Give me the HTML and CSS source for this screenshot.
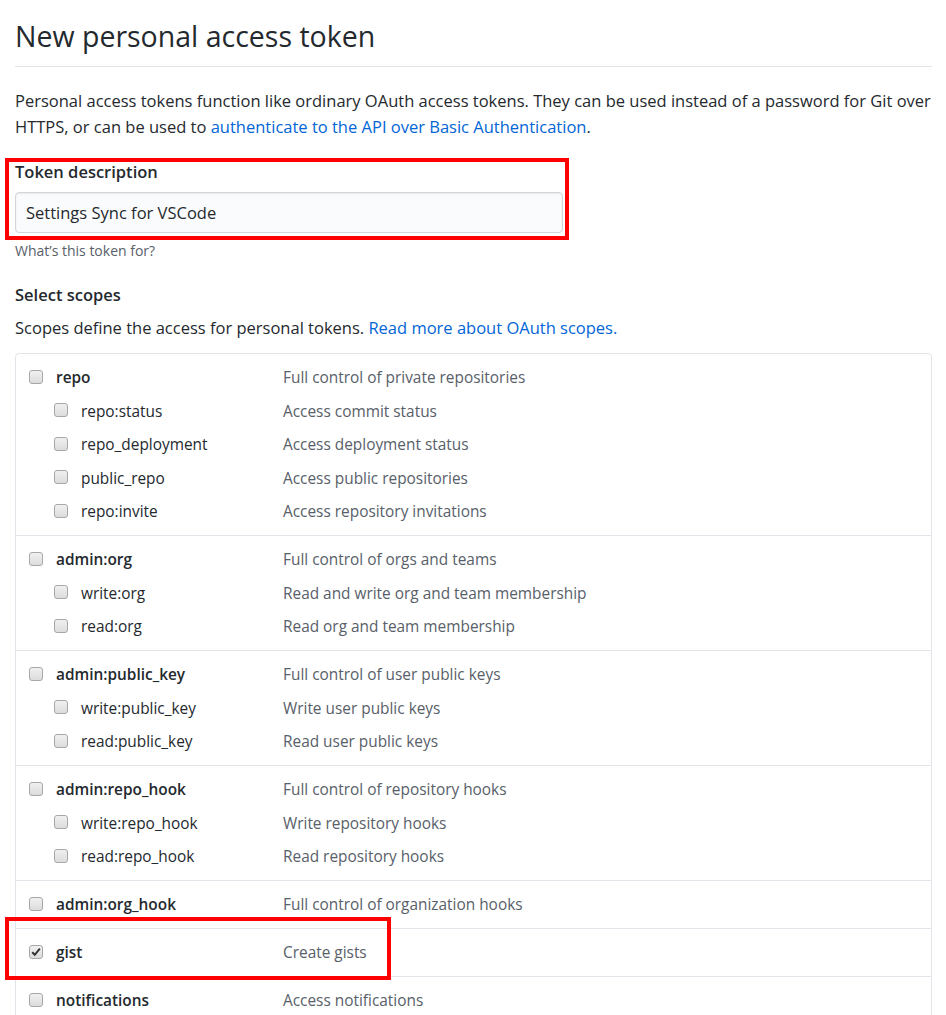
FILE: index.html
```html
<!DOCTYPE html>
<html lang="en">
<head>
<meta charset="utf-8">
<title>New personal access token</title>
<link rel="stylesheet" href="styles.css">
</head>
<body>
<div class="page">
  <div class="subhead">
    <h1 class="subhead-title">New personal access token</h1>
  </div>
  <p class="intro">Personal access tokens function like ordinary OAuth access tokens. They can be used instead of a password for Git over HTTPS, or can be used to <a href="#">authenticate to the API over Basic Authentication</a>.</p>

  <div class="field">
    <label class="field-label">Token description</label>
    <div class="input">Settings Sync for VSCode</div>
    <p class="note">What’s this token for?</p>
  </div>

  <h2 class="section-label">Select scopes</h2>
  <p class="scopes-intro">Scopes define the access for personal tokens. <a href="#">Read more about OAuth scopes.</a></p>

  <div class="scopes">
    <div class="group">
      <div class="row parent"><span class="cb"></span><span class="name">repo</span><span class="desc">Full control of private repositories</span></div>
      <div class="row child"><span class="cb"></span><span class="name">repo:status</span><span class="desc">Access commit status</span></div>
      <div class="row child"><span class="cb"></span><span class="name">repo_deployment</span><span class="desc">Access deployment status</span></div>
      <div class="row child"><span class="cb"></span><span class="name">public_repo</span><span class="desc">Access public repositories</span></div>
      <div class="row child"><span class="cb"></span><span class="name">repo:invite</span><span class="desc">Access repository invitations</span></div>
    </div>
    <div class="group">
      <div class="row parent"><span class="cb"></span><span class="name">admin:org</span><span class="desc">Full control of orgs and teams</span></div>
      <div class="row child"><span class="cb"></span><span class="name">write:org</span><span class="desc">Read and write org and team membership</span></div>
      <div class="row child"><span class="cb"></span><span class="name">read:org</span><span class="desc">Read org and team membership</span></div>
    </div>
    <div class="group">
      <div class="row parent"><span class="cb"></span><span class="name">admin:public_key</span><span class="desc">Full control of user public keys</span></div>
      <div class="row child"><span class="cb"></span><span class="name">write:public_key</span><span class="desc">Write user public keys</span></div>
      <div class="row child"><span class="cb"></span><span class="name">read:public_key</span><span class="desc">Read user public keys</span></div>
    </div>
    <div class="group">
      <div class="row parent"><span class="cb"></span><span class="name">admin:repo_hook</span><span class="desc">Full control of repository hooks</span></div>
      <div class="row child"><span class="cb"></span><span class="name">write:repo_hook</span><span class="desc">Write repository hooks</span></div>
      <div class="row child"><span class="cb"></span><span class="name">read:repo_hook</span><span class="desc">Read repository hooks</span></div>
    </div>
    <div class="group">
      <div class="row parent"><span class="cb"></span><span class="name">admin:org_hook</span><span class="desc">Full control of organization hooks</span></div>
    </div>
    <div class="group">
      <div class="row parent"><span class="cb checked"><svg viewBox="0 0 14 14" width="14" height="14"><path d="M3.2 7.2 L5.8 9.8 L10.8 3.6" fill="none" stroke="#333" stroke-width="2"/></svg></span><span class="name">gist</span><span class="desc">Create gists</span></div>
    </div>
    <div class="group">
      <div class="row parent"><span class="cb"></span><span class="name">notifications</span><span class="desc">Access notifications</span></div>
    </div>
  </div>
</div>
<div class="highlight hl-token"></div>
<div class="highlight hl-gist"></div>
</body>
</html>
```

FILE: styles.css
```css
html, body {
  margin: 0;
  padding: 0;
  background: #fff;
}
body {
  font-family: "Open Sans", "Noto Sans", sans-serif;
  font-size: 16.5px;
  color: #24292e;
  position: relative;
  overflow: hidden;
  height: 1015px;
}
a {
  color: #0366d6;
  text-decoration: none;
}
.page {
  width: 917px;
  padding-left: 15px;
}
.subhead {
  border-bottom: 1px solid #e1e4e8;
  padding-top: 16px;
  padding-bottom: 10px;
}
.subhead-title {
  margin: 0;
  font-size: 28.5px;
  font-weight: 400;
  line-height: 40px;
  color: #24292e;
}
.intro {
  margin: 21px 0 0;
  line-height: 26px;
}
.field {
  margin-top: 19px;
}
.field-label {
  display: block;
  font-weight: 600;
  line-height: 26px;
}
.input {
  margin-top: 7px;
  height: 39px;
  width: 536px;
  border: 1px solid #d1d5da;
  border-radius: 4px;
  background: #fafbfc;
  box-shadow: inset 0 1px 2px rgba(27, 31, 35, 0.075);
  padding-left: 10px;
  line-height: 39px;
}
.note {
  margin: 8px 0 0;
  font-size: 14px;
  line-height: 20px;
  color: #586069;
}
.section-label {
  margin: 22px 0 0;
  font-size: 16.5px;
  font-weight: 600;
  line-height: 24px;
}
.scopes-intro {
  margin: 9px 0 0;
  line-height: 24px;
}
.scopes {
  margin-top: 13px;
  border: 1px solid #e1e4e8;
  border-radius: 4px;
  font-size: 15.4px;
}
.group {
  padding: 6.75px 0;
}
.group + .group {
  border-top: 1px solid #e1e4e8;
}
.row {
  display: grid;
  grid-template-columns: 14px 1fr 648px;
  column-gap: 13px;
  align-items: center;
  height: 33.5px;
  padding-left: 13px;
}
.row.child {
  padding-left: 38px;
}
.name {
  color: #24292e;
}
.parent .name {
  font-weight: 600;
}
.desc {
  color: #586069;
}
.cb {
  display: block;
  width: 12px;
  height: 12px;
  border: 1px solid #a7a7a7;
  border-radius: 3px;
  background: linear-gradient(#f0f0f0, #dcdcdc);
  position: relative;
  top: -1px;
}
.cb svg {
  position: absolute;
  left: -1px;
  top: -1px;
}
.highlight {
  position: absolute;
  border: 4px solid #ff0000;
  box-sizing: border-box;
}
.hl-token {
  left: 5px;
  top: 158px;
  width: 564px;
  height: 82px;
}
.hl-gist {
  left: 5px;
  top: 917px;
  width: 386px;
  height: 63px;
}
```
